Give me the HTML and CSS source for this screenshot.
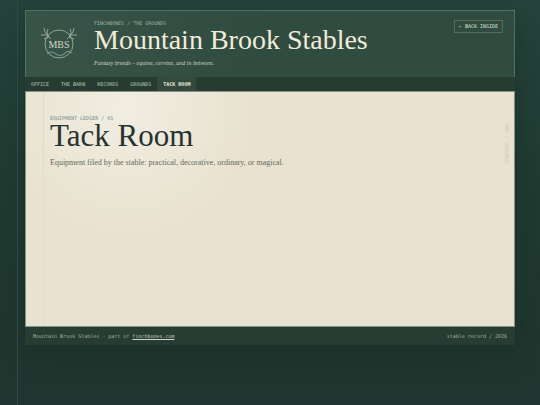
FILE: index.html
```
<!DOCTYPE html>
<html lang="en">
<head>
    <meta charset="UTF-8">
    <meta name="viewport" content="width=device-width, initial-scale=1.0">
    <title>Tack Room - Mountain Brook Stables</title>
    <link rel="stylesheet" href="styles.css">
</head>
<body>
    <div class="site">
        <header class="masthead">
            <svg class="crest" viewBox="0 0 40 36" aria-hidden="true">
                <circle cx="20" cy="18" r="14"/>
                <path d="M12 13 L9 10 L6 6 L5 2 M9 10 L8 6 L9 3 M8 9 L2 9 M10 11 L5 13"/>
                <path d="M28 13 L31 10 L34 6 L35 2 M31 10 L32 6 L31 3 M32 9 L38 9 M30 11 L35 13"/>
                <path class="brook" d="M8 28 C11 25 14 26 17 28 S23 30 26 27 S31 26 33 27"/>
                <text x="20" y="22">MBS</text>
            </svg>
            <div class="masthead-text">
                <p class="eyebrow">Finchbones / The Grounds</p>
                <p class="site-title">Mountain Brook Stables</p>
                <p class="tagline">Fantasy breeds – equine, cervine, and in between.</p>
            </div>
            <a class="back" href="#">← Back inside</a>
        </header>

        <nav class="nav">
            <a href="#">Office</a>
            <a href="#">The Barn</a>
            <a href="#">Records</a>
            <a href="#">Grounds</a>
            <a class="active" href="#">Tack Room</a>
        </nav>

        <main class="page">
            <p class="eyebrow">Equipment Ledger / 01</p>
            <h1>Tack Room</h1>
            <p class="intro">Equipment filed by the stable: practical, decorative, ordinary, or magical.</p>
            <span class="side-note">MBS / GROUNDS</span>
        </main>

        <footer class="footer">
            <span>Mountain Brook Stables · part of <a href="#">finchbones.com</a></span>
            <span>stable record / 2026</span>
        </footer>
    </div>
</body>
</html>
```
FILE: styles.css
```
* {
    box-sizing: border-box;
}

body {
    margin: 0;
    min-height: 100vh;
    padding: 10px 25px 60px;
    position: relative;
    font-family: "Liberation Serif", serif;
    color: #26332e;
    background: linear-gradient(#25443c, #203a32 50%, #20352f);
}

/* thin rule down the left side of the window */
body::before {
    content: "";
    position: absolute;
    top: 0;
    bottom: 0;
    left: 17px;
    width: 1px;
    background: #2b4c48;
}

p,
h1 {
    margin: 0;
    font-weight: normal;
}

.site {
    display: flex;
    flex-direction: column;
    min-height: calc(100vh - 70px);
    box-shadow: 0 8px 28px rgba(15, 35, 30, 0.4);
}

.masthead {
    display: flex;
    align-items: flex-start;
    padding: 9px 11px 10px 13px;
    border: 1px solid #54705f;
    border-bottom: none;
    background: linear-gradient(90deg, #385449, #304b3f 50%);
}

.crest {
    width: 40px;
    height: 36px;
    margin: 6px 15px 0 0;
    fill: none;
    stroke: #a8b9a6;
    stroke-width: 0.8;
}

.crest .brook {
    stroke: #83aaa7;
    stroke-width: 1;
}

.crest text {
    fill: #d5d9c5;
    stroke: none;
    font-size: 10px;
    text-anchor: middle;
}

.masthead-text {
    flex: 1;
}

.eyebrow {
    font-family: "DejaVu Sans Mono", monospace;
    font-size: 5px;
    line-height: 6px;
    text-transform: uppercase;
    color: #9aafa0;
}

.site-title {
    font-size: 28px;
    line-height: 28px;
    color: #f1ecd9;
}

.tagline {
    margin-top: 5px;
    font-size: 6px;
    line-height: 8px;
    font-style: italic;
    color: #ced5c4;
}

.back {
    padding: 2px 4px;
    border: 1px solid #526e60;
    font-family: "DejaVu Sans Mono", monospace;
    font-size: 5px;
    line-height: 7px;
    text-transform: uppercase;
    text-decoration: none;
    color: #dce0cf;
}

.nav {
    display: flex;
    background: #263b32;
}

.nav a {
    padding: 4px 6px;
    font-family: "DejaVu Sans Mono", monospace;
    font-size: 5px;
    line-height: 6px;
    text-transform: uppercase;
    text-decoration: none;
    color: #b9c5b3;
}

.nav .active {
    background: #34493e;
    color: #f1ecd9;
    font-weight: bold;
}

.page {
    position: relative;
    flex: 1;
    padding: 23px 24px;
    border: 1px solid #87917f;
    background: radial-gradient(circle at 100px 15px, #f1ede2, #e8e2ce 130px);
}

.page::before {
    content: "";
    position: absolute;
    top: 0;
    bottom: 0;
    left: 17px;
    width: 1px;
    background: #dfdccb;
}

.page .eyebrow {
    color: #6f8e99;
}

h1 {
    font-size: 31px;
    line-height: 30px;
    color: #26332e;
}

.intro {
    margin-top: 7px;
    font-size: 8px;
    line-height: 10px;
    color: #626a60;
}

.side-note {
    position: absolute;
    top: 32px;
    right: 4px;
    writing-mode: vertical-rl;
    font-family: "DejaVu Sans Mono", monospace;
    font-size: 5px;
    line-height: 6px;
    color: #cfcbb9;
}

.footer {
    display: flex;
    justify-content: space-between;
    padding: 6px 8px;
    background: #273c33;
    font-family: "DejaVu Sans Mono", monospace;
    font-size: 5px;
    line-height: 6px;
    color: #a5b3a2;
}

.footer a {
    color: #d3d8c5;
}
```
